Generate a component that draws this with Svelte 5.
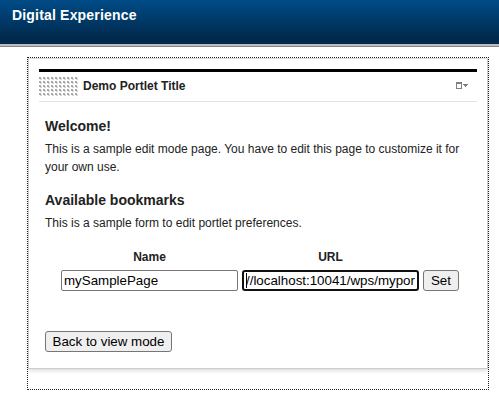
<script>
  let name = $state('mySamplePage');
  let url = $state('//localhost:10041/wps/mypor');
</script>

<header class="banner"><span>Digital Experience</span></header>
<main class="zone">
  <section class="card">
    <div class="titlebar">
      <svg class="grip" width="39" height="19" shape-rendering="crispEdges" aria-hidden="true">
        <defs>
          <pattern id="dots" width="4" height="4" patternUnits="userSpaceOnUse">
            <rect x="1" y="1" width="2" height="2" fill="#d6d6d6" />
            <rect width="2" height="2" fill="#a8a8a8" />
          </pattern>
        </defs>
        <rect width="39" height="19" fill="url(#dots)" />
      </svg>
      <h1>Demo Portlet Title</h1>
      <svg class="menu" width="12" height="7" shape-rendering="crispEdges" aria-hidden="true">
        <path fill="#808080" fill-rule="evenodd" d="M0 0h6v7H0zM1 2v4h4V2zM7 2h5v1H7zM8 3h3v1H8zM9 4h1v1H9z" />
      </svg>
    </div>
    <div class="content">
      <h2>Welcome!</h2>
      <p>This is a sample edit mode page. You have to edit this page to customize it for<br />your own use.</p>
      <h2 class="second">Available bookmarks</h2>
      <p>This is a sample form to edit portlet preferences.</p>
      <div class="form">
        <label class="field"><b>Name</b><input bind:value={name} /></label>
        <label class="field active"><b>URL</b><input bind:value={url} /><i class="caret"></i></label>
        <button class="set">Set</button>
      </div>
      <button class="back">Back to view mode</button>
    </div>
  </section>
</main>

<style>
  :global(body) { background: #fff; overflow: hidden; }
  :global(#app) { font-family: "Liberation Sans", Arial, sans-serif; color: #222; }
  .banner { box-sizing: border-box; height: 47px; padding: 7px 12px; background: linear-gradient(#004b87, #00284a 40px, #002a55 44px); border-bottom: 3px solid #bdbdbd; position: relative; color: #fff; font: bold 14px/17px "Liberation Sans", Arial, sans-serif; letter-spacing: 0.18px; }
  .banner::after { content: ""; position: absolute; left: 0; right: 0; bottom: -3px; height: 1px; background: #85858a; }
  .zone { box-sizing: border-box; width: 462px; height: 333px; margin: 10px 0 0 27px; border: 1px dotted #222; }
  .card { box-sizing: border-box; width: 460px; height: 311px; padding: 10px 10px 0; border: 1px solid #ccc; border-top-color: #ddd; box-shadow: 0 2px 4px #0002; }
  .titlebar { box-sizing: border-box; height: 33px; border-top: 3px solid #000; border-bottom: 1px solid #e3e3e3; display: flex; align-items: center; padding-right: 9px; }
  .grip { margin-right: 5px; }
  h1 { margin: 0 0 2px; font-size: 12px; line-height: 18px; }
  .menu { margin: 0 0 2px auto; }
  .content { padding: 14px 6px 0; }
  h2 { margin: 0 0 4px; font-size: 14px; line-height: 20px; }
  h2.second { margin-top: 14px; }
  p { margin: 0; font-size: 12px; line-height: 18px; white-space: nowrap; }
  .form { display: flex; align-items: flex-end; gap: 4px; margin: 16px 0 0 16px; }
  .field { position: relative; width: 177px; display: flex; flex-direction: column; text-align: center; }
  b { font-size: 12px; line-height: 18px; margin-bottom: 4px; }
  input { box-sizing: border-box; width: 177px; height: 21px; padding: 0 2px; border: 1px solid #767676; border-radius: 2px; outline: 0; color: #000; background: #fff; font: 13.333px "Liberation Sans", Arial, sans-serif; }
  .active input { border: 2px solid #101010; padding: 0 2px; border-radius: 3px; }
  .caret { position: absolute; left: 4px; bottom: 3px; width: 1px; height: 15px; background: #000; }
  button { box-sizing: border-box; height: 21px; padding: 0; border: 1px solid #767676; border-radius: 3px; background: #efefef; color: #000; font: 13.333px "Liberation Sans", Arial, sans-serif; }
  .set { width: 36px; }
  .back { display: block; width: 127px; margin-top: 40px; }
</style>
